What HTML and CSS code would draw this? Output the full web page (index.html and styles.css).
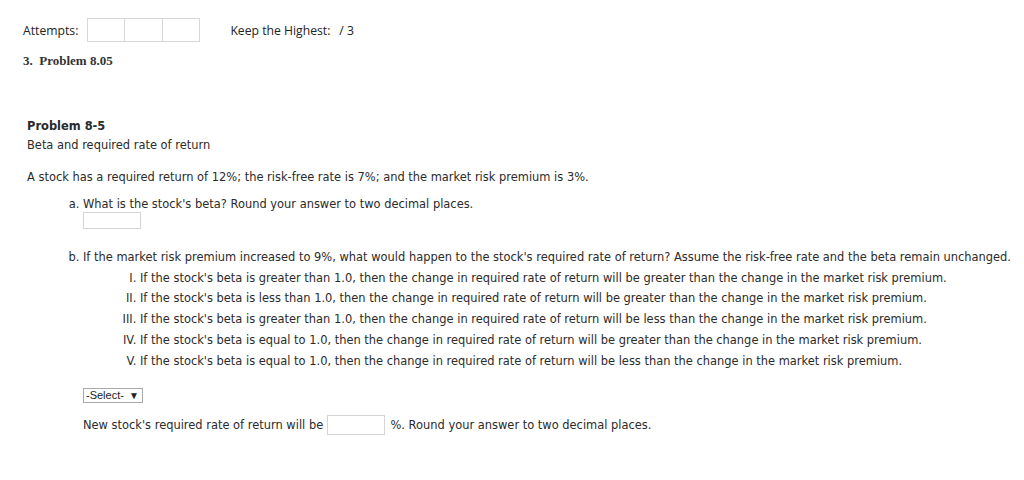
FILE: index.html
```html
<!DOCTYPE html>
<html>
<head>
<meta charset="utf-8">
<link rel="stylesheet" href="styles.css">
</head>
<body>
<div class="top">
  <div class="attempts">
    <span class="label">Attempts:</span>
    <span class="boxes"><span class="box"></span><span class="box"></span><span class="box"></span></span>
    <span class="label keep">Keep the Highest:</span>
    <span class="label score">/ 3</span>
  </div>
  <div class="qtitle">3.&nbsp; Problem 8.05</div>
</div>
<div class="problem">
  <div class="ptitle">Problem 8-5</div>
  <div class="psub">Beta and required rate of return</div>
  <div class="intro">A stock has a required return of 12%; the risk-free rate is 7%; and the market risk premium is 3%.</div>
  <ol class="parts">
    <li class="part-a">
      <div class="qline">What is the stock's beta? Round your answer to two decimal places.</div>
      <span class="field small"></span>
    </li>
    <li class="part-b">
      <div class="qline-b">If the market risk premium increased to 9%, what would happen to the stock's required rate of return? Assume the risk-free rate and the beta remain unchanged.</div>
      <ol class="roman">
        <li>If the stock's beta is greater than 1.0, then the change in required rate of return will be greater than the change in the market risk premium.</li>
        <li>If the stock's beta is less than 1.0, then the change in required rate of return will be greater than the change in the market risk premium.</li>
        <li>If the stock's beta is greater than 1.0, then the change in required rate of return will be less than the change in the market risk premium.</li>
        <li>If the stock's beta is equal to 1.0, then the change in required rate of return will be greater than the change in the market risk premium.</li>
        <li>If the stock's beta is equal to 1.0, then the change in required rate of return will be less than the change in the market risk premium.</li>
      </ol>
    </li>
  </ol>
  <div class="answer">
    <span class="select">-Select-<span class="arrow">▼</span></span>
    <div class="newrow">New stock's required rate of return will be <span class="field wide"></span> %. Round your answer to two decimal places.</div>
  </div>
</div>
</body>
</html>
```

FILE: styles.css
```css
* { box-sizing: border-box; }
html, body { margin: 0; padding: 0; background: #fff; }
body { color: #2b2b2b; font-family: "DejaVu Sans", Verdana, sans-serif; font-size: 11.45px; }

.top { padding: 18px 0 0 23px; }
.attempts { display: flex; align-items: center; height: 24px; }
.label { font-family: "Open Sans", Lato, sans-serif; font-size: 12.2px; color: #222; }
.boxes { display: flex; margin-left: 9px; }
.box { width: 37.7px; height: 24px; border: 1px solid #d8d8d8; }
.box + .box { border-left: none; width: 37.7px; }
.keep { margin-left: 30px; }
.score { margin-left: 9px; }
.qtitle { font-family: "Liberation Serif", serif; font-weight: bold; font-size: 13px; margin-top: 11px; line-height: 16px; color: #333; }

.problem { padding-left: 27px; margin-top: 47.5px; }
.ptitle { font-weight: bold; line-height: 19px; }
.psub { line-height: 19px; }
.intro { line-height: 19px; margin-top: 13px; }
.parts { list-style: lower-alpha; margin: 0; padding-left: 56px; }
.part-a { margin-top: 9.5px; }
.qline { line-height: 16px; }
.field { display: inline-block; border: 1px solid #d5d5d5; background: #fff; vertical-align: middle; }
.field.small { display: block; width: 58px; height: 17px; }
.part-b { margin-top: 18px; }
.qline-b { line-height: 20px; white-space: nowrap; }
.roman { list-style: upper-roman; margin: 0; padding-left: 57px; }
.roman li { line-height: 20.75px; }
.roman li:first-child { margin-top: 0.5px; }

.answer { padding-left: 56px; margin-top: 16.5px; }
.select { display: inline-flex; align-items: center; height: 15px; width: 60px; border: 1px solid #a9a9a9; font-family: "Liberation Sans", Arial, sans-serif; font-size: 11px; color: #222; padding-left: 2px; }
.arrow { font-size: 10px; margin-left: 5px; }
.newrow { margin-top: 12px; height: 20px; display: flex; align-items: center; white-space: pre; }
.field.wide { width: 58px; height: 20px; margin: 0 2px 0 0; }
```
